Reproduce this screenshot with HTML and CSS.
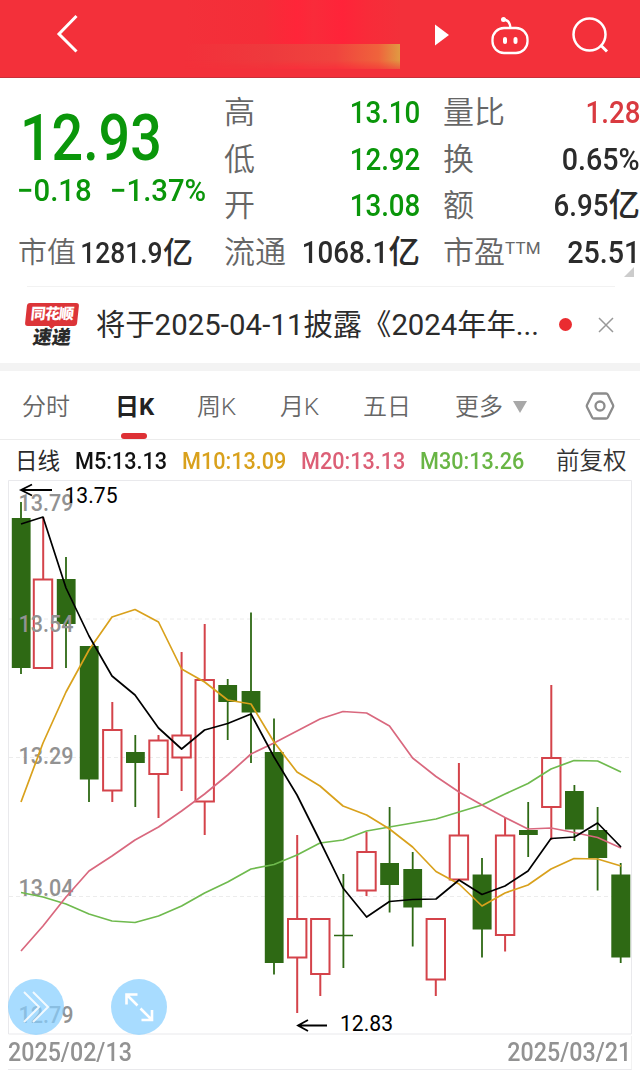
FILE: index.html
```html
<!DOCTYPE html>
<html lang="zh-CN">
<head>
<meta charset="utf-8">
<title>日K</title>
<link rel="stylesheet" href="styles.css">
</head>
<body>
<header class="topbar">
  <svg class="back" width="24" height="40" viewBox="0 0 24 40"><path d="M21.500 2 4 20 21.500 37.500" fill="none" stroke="#fff" stroke-width="3"/></svg>
  <div class="title-mask"><div class="title-glow"></div></div>
  <svg class="play" width="14" height="22" viewBox="0 0 14 22"><path d="M0 0.500 14 11 0 21.500Z" fill="#fff"/></svg>
  <svg class="robot" width="40" height="40" viewBox="0 0 40 40" fill="none" stroke="#fff" stroke-width="2.300"><rect x="2.500" y="12" width="35" height="25" rx="11.500"/><path d="M13 3.500C17 3.500 20 6 20.500 12"/><circle cx="13.500" cy="3.500" r="2.500" fill="#fff" stroke="none"/><rect x="13" y="21" width="4" height="7" rx="2" fill="#fff" stroke="none"/><rect x="23.500" y="21" width="4" height="7" rx="2" fill="#fff" stroke="none"/></svg>
  <svg class="search" width="38" height="38" viewBox="0 0 38 38" fill="none" stroke="#fff" stroke-width="2.500"><circle cx="17.500" cy="17.500" r="16"/><path d="m28.500 28 6.500 6.500" stroke-width="3"/></svg>
</header>

<section class="quote">
  <div class="col-main">
    <div class="price"><span class="num">12.93</span></div>
    <div class="change"><span class="num">−0.18</span><span class="num">−1.37%</span></div>
    <div class="cap"><span class="label">市值</span><span class="value"><span class="num">1281.9</span>亿</span></div>
  </div>
  <div class="col-mid">
    <div class="row"><span class="label">高</span><span class="value green"><span class="num">13.10</span></span></div>
    <div class="row"><span class="label">低</span><span class="value green"><span class="num">12.92</span></span></div>
    <div class="row"><span class="label">开</span><span class="value green"><span class="num">13.08</span></span></div>
    <div class="row"><span class="label">流通</span><span class="value"><span class="num">1068.1</span>亿</span></div>
  </div>
  <div class="col-end">
    <div class="row"><span class="label">量比</span><span class="value red"><span class="num">1.28</span></span></div>
    <div class="row"><span class="label">换</span><span class="value"><span class="num wide">0.65%</span></span></div>
    <div class="row"><span class="label">额</span><span class="value"><span class="num">6.95</span>亿</span></div>
    <div class="row"><span class="label">市盈<span class="ttm">TTM</span></span><span class="value"><span class="num wide">25.51</span></span></div>
  </div>
  <i class="corner"></i>
</section>

<section class="news">
  <div class="logo"><div class="logo-top">同花顺</div><div class="logo-bottom">速递</div></div>
  <div class="headline">将于<span class="date">2025-04-11</span>披露《2024年年...</div>
  <i class="dot"></i>
  <svg class="close" width="16" height="16" viewBox="0 0 16 16"><path d="m1 1 14 14M15 1 1 15" stroke="#999" stroke-width="1.500"/></svg>
</section>

<nav class="tabs">
  <span class="tab">分时</span>
  <span class="tab active">日K</span>
  <span class="tab">周K</span>
  <span class="tab">月K</span>
  <span class="tab">五日</span>
  <span class="tab more">更多<i class="caret"></i></span>
  <svg class="gear" width="30" height="28" viewBox="0 0 30 28" fill="none" stroke="#8c8c8c" stroke-width="2.300"><path d="M9 1.500h12q1.200 0 1.800 1L28 13q.5 1 0 2l-5.200 10.500q-.6 1-1.800 1H9q-1.200 0-1.800-1L2 15q-.5-1 0-2L7.200 2.500q.6-1 1.800-1Z"/><circle cx="15" cy="14" r="4.500"/></svg>
</nav>

<div class="averages">
  <span class="period">日线</span>
  <span class="ma ma5">M5:13.13</span>
  <span class="ma ma10">M10:13.09</span>
  <span class="ma ma20">M20:13.13</span>
  <span class="ma ma30">M30:13.26</span>
  <span class="adjust">前复权</span>
</div>

<div class="chart">
  <svg class="plot" width="640" height="556" viewBox="0 480 640 556">
    <g class="frame"><path d="M8.500 1034V480.500H631.500V1034Z"/></g>
    <g class="grid"><path d="M9 619H631M9 757.500H631M9 896.500H631"/></g>
    <g class="down-wick">
      <path d="M21 502V674M66 557V668M89 646V802M135.300 735V807M227.700 679V740M251 612.500V763M274 718.500V974.500M343.400 874V968M389.600 807V912.500M412.700 852V946.500M482 858V957.500M528.200 802V857M574.400 785V841M597.600 807V890.500M620.700 863V963"/>
    </g>
    <g class="down">
      <path d="M11.800 518h18.800v150h-18.800ZM56.800 579h18.800v45h-18.800ZM79.800 646h18.800v133.500h-18.800ZM126 752h18.800v11h-18.800ZM218.300 685h18.800v17h-18.800ZM241.600 691h18.800v21.500h-18.800ZM264.800 752h18.800v211h-18.800ZM334 934.700h19v1.600h-19ZM380.200 863h18.800v22h-18.800ZM403.300 869h18.800v38.500h-18.800ZM472.600 874.500h19v55h-19ZM519 830h18.800v5h-18.800ZM565 791h18.800v38.500h-18.800ZM588.200 830h19v28h-19ZM611.300 874.500h19v83h-19Z"/>
    </g>
    <g class="up">
      <path d="M43.200 517V579M112.300 702V730M112.300 790.500V802M158.500 735V740M158.500 774V818M181.600 652V735M181.600 757.500V791M204.700 624V680M204.700 801.500V835M297.200 835V919M297.200 957.500V1013M320.300 974V996M366.500 832V852M366.500 890.500V896M435.800 979V996M458.900 763V835.500M505.100 818V835.500M505.100 935V951.500M551.300 685V758M551.300 807V840"/>
      <path d="M33.800 579.500h18.400v88.500h-18.400ZM103.100 730h18.400v60.500h-18.400ZM149.300 740.500h18.400v33.500h-18.400ZM172.400 735.500h18.400v22h-18.400ZM195.500 680h18.400v121.500h-18.400ZM288 919h18.400v38.500h-18.400ZM311.100 919h18.400v55h-18.400ZM357.300 852h18.400v38.500h-18.400ZM426.600 919h18.400v60.500h-18.400ZM449.700 835.500h18.400v44h-18.400ZM495.900 835.500h18.400v99.500h-18.400ZM542.100 758h18.400v49h-18.400Z"/>
    </g>
    <g class="axis">
      <text x="18.500" y="510.500" textLength="55" lengthAdjust="spacingAndGlyphs">13.79</text>
      <text x="18.500" y="631.500" textLength="55" lengthAdjust="spacingAndGlyphs">13.54</text>
      <text x="18.500" y="764" textLength="55" lengthAdjust="spacingAndGlyphs">13.29</text>
      <text x="18.500" y="896" textLength="55" lengthAdjust="spacingAndGlyphs">13.04</text>
      <text x="18.500" y="1022.500" textLength="55" lengthAdjust="spacingAndGlyphs">12.79</text>
    </g>
    <g class="lines">
      <polyline class="l30" points="21,892.5 43,897 66,904 89,914 112,921 135,922.5 158.500,916 181.600,906 204.600,893 227.700,882 251,869 274,864.5 297,855 320,843 343,840 366.600,831 389.500,827 412.600,823 436,819 459,812 482,805 505,794 528,783.5 551,769 574,760.5 597.600,761 621,772"/>
      <polyline class="l20" points="21,951 43,926 66,897 89,871 112,856 135,840 158.500,827 181.600,811 204.600,794 227.700,775 251,754 274,743 297,731 320,719 343,711.5 366.600,713 389.500,726 412.600,758 436,776.5 459,792 482,805 505,817.5 528,829 551,828 574,832.5 597.600,837.5 621,848"/>
      <polyline class="l10" points="21,802 43,743 66,692 89,650 112,617 135,609.5 158.500,622 181.600,669 204.600,682 227.700,700 251,704 274,742 297,772 320,786 343,806 366.600,815 389.500,829 412.600,847 436,871.5 459,884 482,906 505,893 528,885 551,869 574,858.5 597.600,859 621,866"/>
      <polyline class="l5" points="21,524 43,517 66,588 89,636 112,676 135,695 158.500,728 181.600,749 204.600,730 227.700,723.5 251,714 274,757 297,795 320,841 343,888 366.600,917 389.500,901.5 412.600,899.5 436,899 459,880 482,894.5 505,886 528,871 551,838.5 574.500,837 597.600,823 621,847"/>
    </g>
    <g class="marks">
      <path d="M52 490H21M32 484.500 21 490 32 495.500M327 1025.500H298M308 1020 298 1025.500 308 1031"/>
      <text x="64.500" y="502.500" textLength="53" lengthAdjust="spacingAndGlyphs">13.75</text>
      <text x="340" y="1030.500" textLength="53" lengthAdjust="spacingAndGlyphs">12.83</text>
    </g>
  </svg>
  <div class="tools">
    <span class="tool"><svg width="56" height="56" viewBox="0 0 56 56"><path d="m16 13 15 15-15 15M25 13l15 15-15 15"/></svg></span>
    <span class="tool"><svg width="56" height="56" viewBox="0 0 56 56"><path class="bold" d="M26.500 26.500 16 16M15.500 25.500V15.500H26.500M29.500 29.500 40.500 40.500M41 31V41H30.500"/></svg></span>
  </div>
</div>
<div class="dates"><span>2025/02/13</span><span class="to">2025/03/21</span></div>
</body>
</html>
```
FILE: styles.css
```css
* { box-sizing: border-box; }
body {
  margin: 0;
  width: 640px;
  height: 1074px;
  overflow: hidden;
  background: #fff;
  color: #2b2b2b;
  font-family: Roboto, "Noto Sans CJK SC", sans-serif;
}
i { display: block; }
svg { display: block; flex: none; }

.topbar {
  display: flex;
  height: 78px;
  background: #f3303a;
  border-bottom: 1px solid #c9303a;
}
.back { margin: 14px 0 0 55px; }
.title-mask {
  width: 215px;
  height: 69px;
  margin-left: 106px;
  padding-top: 44px;
  background: linear-gradient(90deg, #f3303a 0, #f52d38 36%, #ff2539 52%, #f92b3a 60%, #ff2339 73%, #f82b39 85%, #f3303a 100%);
}
.title-glow {
  height: 25px;
  background: linear-gradient(90deg, #f3303a 0, #ee3a3d 40%, #f0443e 70%, #ef633c 90%, #e09a42 100%);
  -webkit-mask-image: linear-gradient(#000 65%, #0006);
}
.play { margin: 24px 0 0 35px; }
.robot { margin: 16px 0 0 41px; }
.search { margin: 17px 0 0 42px; }

.quote {
  position: relative;
  display: flex;
  height: 208px;
  padding-top: 12px;
}
.num { display: inline-block; font-weight: 500; white-space: nowrap; transform: scaleX(.88); transform-origin: 100% 50%; }
.num.wide { transform: scaleX(.91); }
.col-main { width: 224px; }
.price { height: 84px; padding: 10px 0 0 20px; color: #0a960a; font-size: 65px; line-height: 76px; }
.price .num { transform-origin: 0 50%; transform: scaleX(.855); }
.change { display: flex; height: 40px; padding-left: 17px; color: #0a960a; font-size: 31px; line-height: 34px; }
.change .num { width: 92.500px; transform-origin: 0 50%; transform: scaleX(.945); }
.cap { display: flex; justify-content: space-between; width: 193px; padding-left: 18px; line-height: 46px; margin-top: 16px; }
.label { flex: none; color: #666; font-weight: 350; font-size: 31px; white-space: nowrap; }
.cap .label { font-size: 29px; }
.value { display: flex; justify-content: flex-end; min-width: 0; font-size: 31.500px; font-weight: 500; white-space: nowrap; }
.value .num { flex: none; }
.cap .value { font-size: 30px; }
.col-mid { width: 196px; }
.col-end { width: 197px; margin-left: 23px; }
.row { display: flex; justify-content: space-between; height: 46.600px; line-height: 46px; }
.green { color: #0a960a; }
.red { color: #d93a40; }
.ttm { font-size: 17px; line-height: 0; vertical-align: 9px; letter-spacing: .2px; font-weight: 400; }
.corner { position: absolute; right: 6px; bottom: 9px; border-left: 10px solid transparent; border-bottom: 10px solid #ccc; }

.news {
  display: flex;
  align-items: center;
  height: 77px;
  padding-left: 26px;
  background: linear-gradient(#f2f2f2, #f2f2f2) 27px 0 / 588px 1px no-repeat;
}
.logo { width: 52px; font-weight: 900; text-align: center; }
.logo-top { position: relative; height: 23px; background: #dc3438; border-radius: 3px; color: #fff; font-size: 15px; line-height: 22px; transform: skewX(-6deg); letter-spacing: -.8px; }
.logo-top::after { content: ""; position: absolute; left: 23px; top: 22px; border: 4px solid transparent; border-top-color: #dc3438; border-bottom: 0; }
.logo-bottom { height: 21px; color: #2a2a2a; font-size: 19px; line-height: 23px; transform: skewX(-8deg); }
.headline { width: 443px; margin-left: 18px; font-size: 29.300px; line-height: 42px; white-space: nowrap; font-weight: 400; }
.headline .date { letter-spacing: .1px; }
.dot { width: 13px; height: 13px; margin-left: 20px; border-radius: 50%; background: #ea2c30; }
.close { margin-left: 26px; }

.tabs {
  display: flex;
  height: 77px;
  padding: 8px 0 0 22px;
  border-top: 8px solid #f3f3f3;
  border-bottom: 1px solid #ececec;
  color: #666;
  font-size: 24px;
  line-height: 57px;
}
.tab { position: relative; flex: none; width: 83px; font-weight: 350; }
.tab:first-child { width: 93px; }
.tab.active { width: 82px; color: #222; font-weight: 700; }
.tab.active::after { content: ""; position: absolute; left: 6px; top: 54px; width: 26px; height: 6px; border-radius: 3px; background: #dd3035; }
.tab.more { display: flex; width: 130px; margin-left: 9px; }
.caret { margin: 22px 0 0 10px; height: 0; border: 7px solid transparent; border-top: 12px solid #a8a8a8; border-bottom: 0; }
.gear { margin: 13px 0 0 0; }

.averages {
  display: flex;
  height: 40px;
  padding-left: 15px;
  line-height: 43px;
  font-size: 22.500px;
}
.averages > span { white-space: nowrap; flex: none; }
.period { width: 60px; font-weight: 400; }
.ma { font-size: 23.500px; font-weight: 500; transform: scaleX(.92); transform-origin: 0 50%; }
.ma5 { width: 107px; color: #111; }
.ma10 { width: 119px; color: #d9a11c; }
.ma20 { width: 119px; color: #dc5f76; }
.ma30 { width: 136px; color: #69b545; }
.adjust { font-size: 23.500px; font-weight: 350; color: #333; }

.chart { position: relative; height: 556px; }
.frame path { fill: none; stroke: #e9e9ec; }
.grid path { stroke: #ececec; stroke-dasharray: 4 3; }
.down { fill: #2e6914; }
.down-wick path { stroke: #2e6914; stroke-width: 1.800; }
.up path { fill: none; stroke: #d4434a; stroke-width: 2; }
.axis text { fill: #929292; font-size: 24px; font-weight: 500; }
.lines polyline { fill: none; stroke-width: 1.700; stroke-linejoin: round; }
.lines .l5 { stroke: #000; }
.lines .l10 { stroke: #d9a11c; }
.lines .l20 { stroke: #d9687e; }
.lines .l30 { stroke: #6fba4e; }
.marks path { fill: none; stroke: #000; stroke-width: 1.800; }
.marks text { fill: #000; font-size: 21.500px; }
.tools { position: absolute; left: 8px; bottom: 1px; display: flex; gap: 47px; }
.tool { width: 56px; height: 56px; border-radius: 50%; background: rgba(135, 206, 255, .72); }
.tool path { fill: none; stroke: #fff; stroke-width: 2; opacity: .85; }
.tool .bold { stroke-width: 2.600; opacity: 1; }

.dates {
  display: flex;
  justify-content: space-between;
  height: 34px;
  margin: 0 8px;
  border-bottom: 1px solid #e9e9ec;
  border-right: 1px solid #f2f2f2;
  color: #929292;
  font-size: 25px;
  font-weight: 500;
  line-height: 33px;
}
.dates span { transform: scaleX(.93); transform-origin: 0 50%; }
.dates .to { transform-origin: 100% 50%; }
```
